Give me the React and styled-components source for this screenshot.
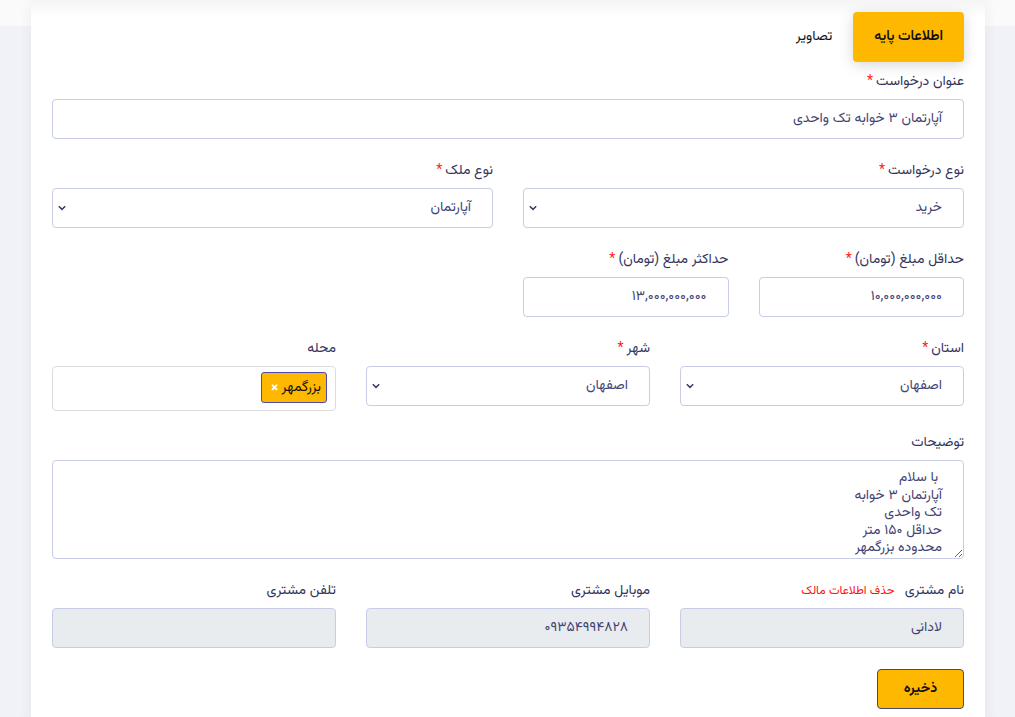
import React from "react";
import styled, { createGlobalStyle } from "styled-components";

const Global = createGlobalStyle`
  html, body { margin: 0; padding: 0; }
  body {
    background: linear-gradient(#fafafa 0, #fafafa 26px, #f1f2f8 26px);
    font-family: Vazirmatn, "DejaVu Sans", "Noto Sans", sans-serif;
    min-height: 717px;
  }
  * { box-sizing: border-box; }
`;

const Page = styled.div`
  padding: 0 30px 0 31px;
`;

const Card = styled.div`
  direction: rtl;
  background: linear-gradient(#f5f5f5 0, #ffffff 18px);
  box-shadow: 0 0 14px rgba(30, 30, 60, 0.05);
  padding: 12px 21px 20px;
  min-height: 717px;
`;

const Tabs = styled.div`
  display: flex;
  margin-bottom: 8px;
`;

const Tab = styled.button`
  height: 50px;
  padding: 0 21px;
  border: none;
  border-radius: 4px;
  font-family: inherit;
  font-size: 14px;
  font-weight: ${(p) => (p.$active ? 600 : 400)};
  color: #111;
  background: ${(p) => (p.$active ? "#ffb800" : "transparent")};
  box-shadow: ${(p) => (p.$active ? "0 3px 14px rgba(0,0,0,0.16)" : "none")};
`;

const Form = styled.div`
  display: flex;
  flex-direction: column;
  gap: 20px;
`;

const Row = styled.div`
  display: grid;
  grid-template-columns: repeat(${(p) => p.$cols}, 1fr);
  column-gap: 30px;
`;

const Field = styled.div`
  display: flex;
  flex-direction: column;
  grid-column: span ${(p) => p.$span || 1};
`;

const Label = styled.div`
  height: 20px;
  padding-top: 2px;
  line-height: 20px;
  font-size: 14px;
  font-weight: 400;
  color: #34345c;
  margin-bottom: 9px;
  display: flex;
  align-items: flex-start;
  gap: 10px;
  white-space: nowrap;
`;

const Star = styled.span`
  color: #ff1a1a;
  margin-right: 3px;
`;

const DangerLink = styled.span`
  color: #ff1010;
  font-size: 12px;
`;

const Input = styled.div`
  height: 40px;
  border: 1px solid #c9cce6;
  border-radius: 4px;
  background: ${(p) => (p.$disabled ? "#e9ecef" : "#fff")};
  padding: 0 21px;
  display: flex;
  align-items: center;
  font-size: 14px;
  color: #444474;
`;

const Select = styled(Input)`
  justify-content: space-between;
  padding: 0 21px 0 4px;
`;

const Chevron = () => (
  <svg width="10" height="6" viewBox="0 0 10 6">
    <path d="M1.8 1.3 L5 4.4 L8.2 1.3" fill="none" stroke="#3a3a6a" strokeWidth="1.5" />
  </svg>
);

const TagBox = styled.div`
  height: 45px;
  border: 1px solid #dcdcdc;
  border-radius: 4px;
  padding: 5px 8px;
  display: flex;
  align-items: flex-start;
`;

const Tag = styled.div`
  height: 31px;
  background: #ffb800;
  border: 1px solid #4c4cb0;
  border-radius: 3px;
  padding: 0 5px 0 9px;
  display: flex;
  align-items: center;
  gap: 3px;
  font-size: 14px;
  color: #111;
`;

const TagX = styled.span`
  color: #fff;
  font-size: 15px;
  font-weight: 700;
`;

const TextArea = styled.textarea`
  height: 99px;
  border: 1px solid #c9cce6;
  border-radius: 4px;
  padding: 9px 21px;
  font-family: inherit;
  font-size: 14px;
  line-height: 17.5px;
  color: #444474;
  direction: ltr;
  text-align: right;
  unicode-bidi: plaintext;
  resize: vertical;
  outline: none;
  overflow: hidden;
`;

const Actions = styled.div`
  display: flex;
  margin-top: 1px;
`;

const SaveButton = styled.button`
  width: 87px;
  height: 40px;
  background: #ffb800;
  border: 1px solid #4a4a68;
  border-radius: 4px;
  font-family: inherit;
  font-size: 14px;
  font-weight: 700;
  color: #111;
`;

const Req = ({ children }) => (
  <Label>
    <span>
      {children}
      <Star>*</Star>
    </span>
  </Label>
);

export default function App() {
  return (
    <>
      <Global />
      <Page>
        <Card>
          <Tabs>
            <Tab $active>اطلاعات پایه</Tab>
            <Tab>تصاویر</Tab>
          </Tabs>
          <Form>
            <Row $cols={1}>
              <Field>
                <Req>عنوان درخواست</Req>
                <Input>آپارتمان ۳ خوابه تک واحدی</Input>
              </Field>
            </Row>
            <Row $cols={2}>
              <Field>
                <Req>نوع درخواست</Req>
                <Select>
                  <span>خرید</span>
                  <Chevron />
                </Select>
              </Field>
              <Field>
                <Req>نوع ملک</Req>
                <Select>
                  <span>آپارتمان</span>
                  <Chevron />
                </Select>
              </Field>
            </Row>
            <Row $cols={4}>
              <Field>
                <Req>حداقل مبلغ (تومان)</Req>
                <Input>۱۰,۰۰۰,۰۰۰,۰۰۰</Input>
              </Field>
              <Field>
                <Req>حداکثر مبلغ (تومان)</Req>
                <Input>۱۳,۰۰۰,۰۰۰,۰۰۰</Input>
              </Field>
            </Row>
            <Row $cols={3}>
              <Field>
                <Req>استان</Req>
                <Select>
                  <span>اصفهان</span>
                  <Chevron />
                </Select>
              </Field>
              <Field>
                <Req>شهر</Req>
                <Select>
                  <span>اصفهان</span>
                  <Chevron />
                </Select>
              </Field>
              <Field>
                <Label>محله</Label>
                <TagBox>
                  <Tag>
                    <span>بزرگمهر</span>
                    <TagX>×</TagX>
                  </Tag>
                </TagBox>
              </Field>
            </Row>
            <Row $cols={1}>
              <Field>
                <Label>توضیحات</Label>
                <TextArea
                  readOnly
                  value={" با سلام\nآپارتمان ۳ خوابه\nتک واحدی\nحداقل ۱۵۰ متر\nمحدوده بزرگمهر"}
                />
              </Field>
            </Row>
            <Row $cols={3}>
              <Field>
                <Label>
                  <span>نام مشتری</span>
                  <DangerLink>حذف اطلاعات مالک</DangerLink>
                </Label>
                <Input $disabled>لادانی</Input>
              </Field>
              <Field>
                <Label>موبایل مشتری</Label>
                <Input $disabled>۰۹۳۵۴۹۹۴۸۲۸</Input>
              </Field>
              <Field>
                <Label>تلفن مشتری</Label>
                <Input $disabled />
              </Field>
            </Row>
            <Actions>
              <SaveButton>ذخیره</SaveButton>
            </Actions>
          </Form>
        </Card>
      </Page>
    </>
  );
}
